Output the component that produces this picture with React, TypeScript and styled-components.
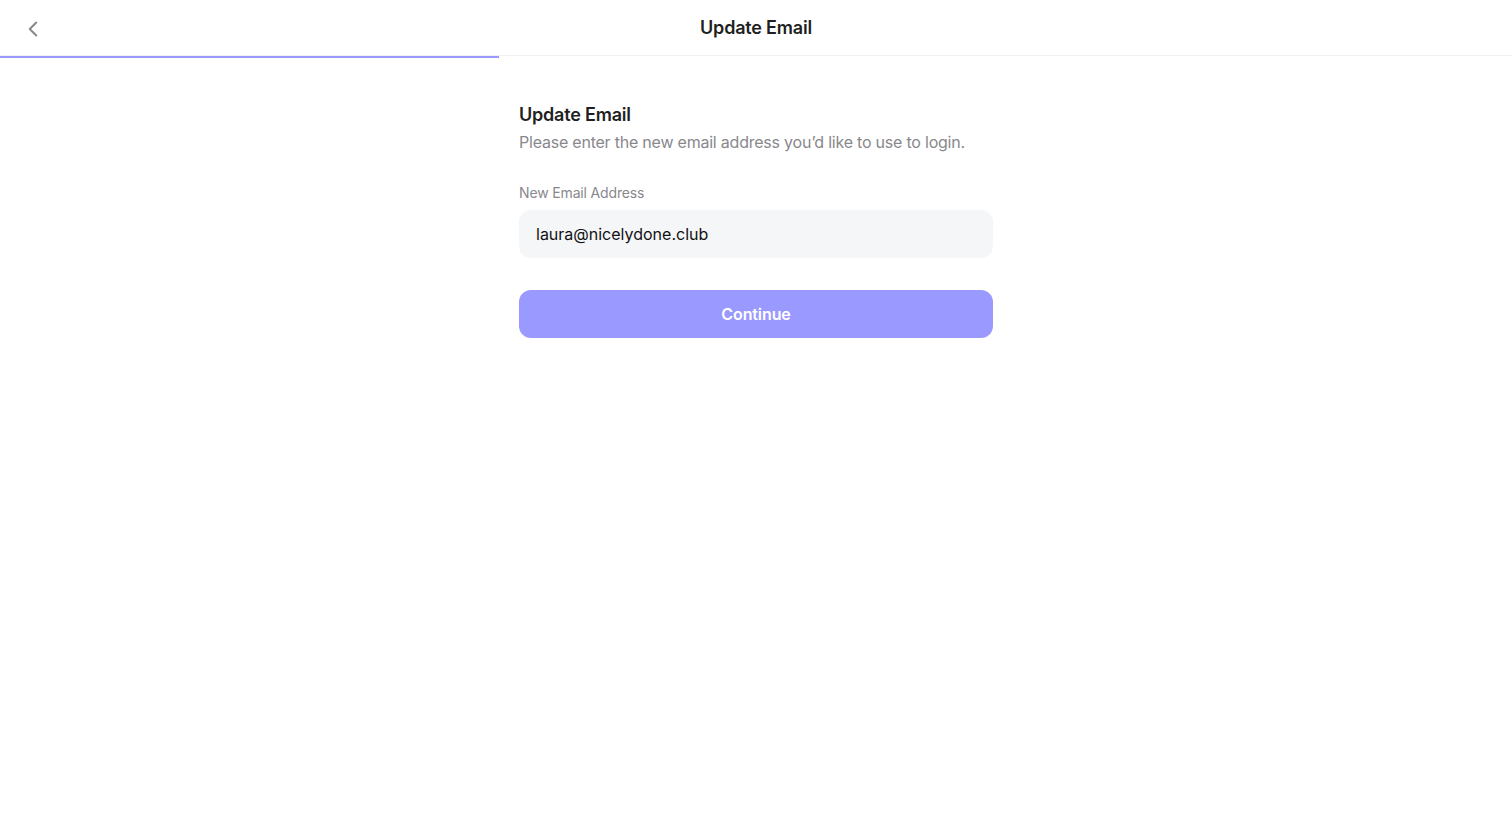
import React, { useState } from 'react';
import styled, { createGlobalStyle } from 'styled-components';
import { ChevronLeft } from 'lucide-react';

const GlobalStyle = createGlobalStyle`
  html, body {
    margin: 0;
    padding: 0;
    background: #ffffff;
    font-family: Inter, "Noto Sans", sans-serif;
    -webkit-font-smoothing: antialiased;
  }
  * { box-sizing: border-box; }
`;

const PageContainer = styled.div`
  min-height: 100vh;
  background-color: #ffffff;
  display: flex;
  flex-direction: column;
`;

const HeaderContainer = styled.div`
  height: 56px;
  display: grid;
  grid-template-columns: 1fr auto 1fr;
  align-items: center;
  padding: 0 20px;
  border-bottom: 1px solid #f0f0f2;
`;

const BackButton = styled.button`
  justify-self: start;
  background: none;
  border: none;
  padding: 0;
  cursor: pointer;
  color: #8a8a8e;
  display: flex;
  align-items: center;
  margin-top: 2px;
`;

const PageTitle = styled.h1`
  margin: 0;
  font-size: 18px;
  font-weight: 600;
  color: #1f1f22;
  letter-spacing: -0.2px;
`;

const ProgressTrack = styled.div`
  height: 2px;
`;

const ProgressFill = styled.div`
  height: 100%;
  background-color: #9999ff;
`;

const ContentContainer = styled.div`
  width: 474px;
  margin: 44px auto 0;
  display: flex;
  flex-direction: column;
`;

const SectionTitle = styled.h2`
  margin: 0;
  font-size: 18px;
  font-weight: 600;
  color: #1f1f22;
  line-height: 26px;
  letter-spacing: -0.2px;
`;

const SectionText = styled.p`
  margin: 2px 0 0;
  font-size: 16px;
  line-height: 24px;
  color: #88888d;
  letter-spacing: -0.22px;
`;

const FieldLabel = styled.label`
  margin-top: 29px;
  font-size: 14px;
  line-height: 20px;
  color: #88888d;
  letter-spacing: -0.15px;
`;

const EmailInput = styled.input`
  margin-top: 7px;
  height: 48px;
  border: none;
  outline: none;
  border-radius: 12px;
  background-color: #f5f6f8;
  padding: 0 17px;
  font-family: Inter, "Noto Sans", sans-serif;
  font-size: 16px;
  color: #111113;
`;

const PrimaryButton = styled.button`
  margin-top: 32px;
  height: 48px;
  border: none;
  border-radius: 12px;
  background-color: #9999ff;
  color: #ffffff;
  font-family: Inter, "Noto Sans", sans-serif;
  font-size: 16px;
  font-weight: 600;
  letter-spacing: -0.1px;
  cursor: pointer;
`;

const App: React.FC = () => {
  const [email, setEmail] = useState('laura@nicelydone.club');
  const progress = 33;

  return (
    <PageContainer>
      <GlobalStyle />
      <HeaderContainer>
        <BackButton aria-label="Back">
          <ChevronLeft size={26} strokeWidth={1.9} />
        </BackButton>
        <PageTitle>Update Email</PageTitle>
        <div />
      </HeaderContainer>
      <ProgressTrack>
        <ProgressFill style={{ width: `${progress}%` }} />
      </ProgressTrack>
      <ContentContainer>
        <SectionTitle>Update Email</SectionTitle>
        <SectionText>Please enter the new email address you’d like to use to login.</SectionText>
        <FieldLabel htmlFor="email">New Email Address</FieldLabel>
        <EmailInput id="email" value={email} onChange={(e) => setEmail(e.target.value)} />
        <PrimaryButton>Continue</PrimaryButton>
      </ContentContainer>
    </PageContainer>
  );
};

export default App;
